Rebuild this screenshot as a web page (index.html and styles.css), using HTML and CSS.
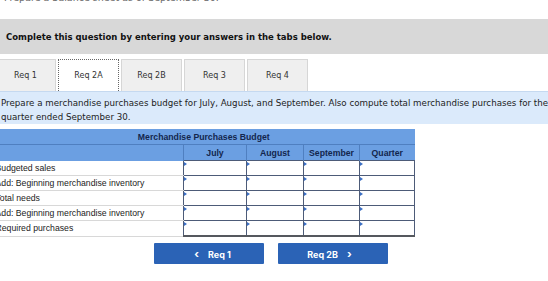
FILE: index.html
```html
<!DOCTYPE html>
<html lang="en">
<head>
  <meta charset="UTF-8" />
  <meta name="viewport" content="width=device-width, initial-scale=1.0"/>
  <title>Req 2A - Merchandise Purchases Budget</title>
  <link rel="stylesheet" href="styles.css">
</head>
<body>

  <p class="lead">Prepare a balance sheet as of September 30.</p>

  <div class="notice">Complete this question by entering your answers in the tabs below.</div>

  <div class="tabs">
    <div class="tab">Req 1</div>
    <div class="tab active">Req 2A</div>
    <div class="tab">Req 2B</div>
    <div class="tab">Req 3</div>
    <div class="tab">Req 4</div>
  </div>

  <div class="instructions">
    Prepare a merchandise purchases budget for July, August, and September. Also compute total merchandise purchases for the quarter ended September 30.
  </div>

  <table class="budget">
    <colgroup>
      <col class="c-label">
      <col class="c-july">
      <col class="c-aug">
      <col class="c-sep">
      <col class="c-qtr">
    </colgroup>
    <thead>
      <tr>
        <th colspan="5" class="title">Merchandise Purchases Budget</th>
      </tr>
      <tr class="months">
        <th class="label-col"></th>
        <th>July</th>
        <th>August</th>
        <th>September</th>
        <th>Quarter</th>
      </tr>
    </thead>
    <tbody id="rows"></tbody>
  </table>

  <div class="nav">
    <button class="nav-btn"><span class="chev">&lsaquo;</span> Req 1</button>
    <button class="nav-btn">Req 2B <span class="chev">&rsaquo;</span></button>
  </div>

  <script>
    const labels = [
      "Budgeted sales",
      "Add: Beginning merchandise inventory",
      "Total needs",
      "Add: Beginning merchandise inventory",
      "Required purchases"
    ];

    const tbody = document.getElementById("rows");

    labels.forEach(label => {
      const tr = document.createElement("tr");
      const td = document.createElement("td");
      td.className = "label";
      td.textContent = label;
      tr.appendChild(td);
      for (let i = 0; i < 4; i++) {
        const cell = document.createElement("td");
        cell.className = "entry";
        tr.appendChild(cell);
      }
      tbody.appendChild(tr);
    });
  </script>

</body>
</html>
```

FILE: styles.css
```css
body {
  margin: 0;
  font-family: 'DejaVu Sans', Verdana, sans-serif;
  background-color: #fff;
  color: #222;
  width: 548px;
  overflow: hidden;
}
.lead {
  margin: -8px 0 0 4px;
  height: 27px;
  line-height: 12px;
  font-size: 9.5px;
  color: #666;
}
.notice {
  background: #d8d8d8;
  height: 35px;
  padding-left: 6px;
  display: flex;
  align-items: center;
  font-size: 8.5px;
  font-weight: bold;
  color: #111;
}
.tabs {
  display: flex;
  gap: 2px;
  margin: 5px 0 0 -5px;
}
.tab {
  width: 59px;
  height: 31px;
  background: #efefef;
  border: 1px solid #d6d6d6;
  border-bottom: none;
  display: flex;
  align-items: center;
  justify-content: center;
  font-size: 8px;
  color: #333;
}
.tab.active {
  background: #fff;
  border: 1px dotted #666;
  border-bottom: none;
}
.instructions {
  background: #dbeafb;
  border-top: 1px solid #c5d9f0;
  padding: 4px 0 0 1px;
  box-sizing: border-box;
  height: 33px;
  font-size: 8.7px;
  line-height: 14px;
  color: #222;
  margin-right: -4px;
}
.budget {
  margin: 5px 0 0 -8px;
  width: 422px;
  table-layout: fixed;
  border-collapse: collapse;
  font-family: 'Liberation Sans', Arial, sans-serif;
  font-size: 8.7px;
}
.c-label { width: 191px; }
.c-july { width: 63px; }
.c-aug { width: 57px; }
.c-sep { width: 56px; }
.c-qtr { width: 55px; }
.budget th {
  background: #6b9fe2;
  color: #13264d;
  font-weight: bold;
  height: 15px;
  padding: 0;
  border-left: 1px solid #4f7fc0;
}
.budget th.title {
  border-bottom: 1px solid #4f7fc0;
  text-align: center;
}
.months th.label-col {
  border-left: none;
}
.budget td {
  height: 14px;
  padding: 0;
}
.budget td.label {
  padding-left: 3px;
  border-bottom: 1px solid #d8d8d8;
  color: #222;
  white-space: nowrap;
  overflow: hidden;
}
.entry {
  border: 1px solid #4d5b78;
  vertical-align: top;
  background: #fff;
}
.entry::before {
  content: "";
  display: block;
  width: 0;
  height: 0;
  margin-top: 1px;
  border-top: 2px solid transparent;
  border-bottom: 2px solid transparent;
  border-left: 3px solid #3b6fc4;
}
tbody tr:last-child .entry {
  border-bottom: 2px solid #55585e;
}
.nav {
  display: flex;
  gap: 14px;
  margin: 6px 0 0 154px;
}
.nav-btn {
  width: 110px;
  height: 21px;
  background-color: #2b63b6;
  color: #fff;
  border: none;
  border-radius: 1px;
  font-family: 'Inter', 'Roboto', sans-serif;
  font-size: 9px;
  font-weight: bold;
  cursor: pointer;
}
.chev {
  font-size: 11px;
  margin: 0 7px;
}
```
